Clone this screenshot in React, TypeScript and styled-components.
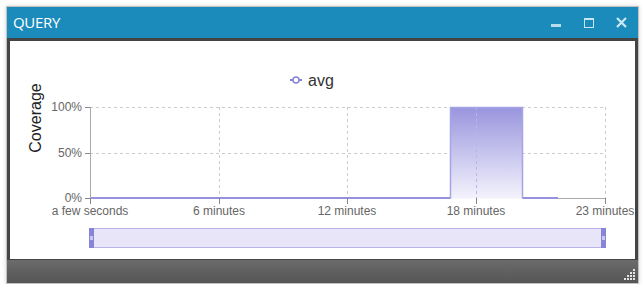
import { FC } from "react";
import styled, { createGlobalStyle } from "styled-components";

const GlobalStyle = createGlobalStyle`
  html, body {
    margin: 0;
    padding: 0;
    background: #ffffff;
  }
  body {
    font-family: "Liberation Sans", Arial, sans-serif;
  }
`;

const Window = styled.div`
  margin: 6px 0 0 6px;
  width: 631px;
  border: 1px solid #c2c2c2;
  box-shadow: 0 0 4px rgba(0, 0, 0, 0.18);
  display: flex;
  flex-direction: column;
`;

const TitleBar = styled.div`
  height: 31px;
  background-color: #1b8bbb;
  display: flex;
  align-items: center;
  padding: 0 0 0 6px;
`;

const Title = styled.span`
  flex: 1 1 auto;
  color: #ffffff;
  font-family: "Open Sans", "Noto Sans", sans-serif;
  font-size: 15px;
  letter-spacing: -0.3px;
  margin-top: -2px;
`;

const TitleButton = styled.div`
  width: 33px;
  height: 31px;
  display: flex;
  align-items: center;
  justify-content: center;

  svg {
    display: block;
  }
`;

const Frame = styled.div`
  background-color: #444444;
  padding: 3px 3px 1px 3px;
`;

const Content = styled.div`
  height: 218px;
  background-color: #ffffff;
`;

const Footer = styled.div`
  height: 21px;
  background: linear-gradient(#6b6b6b, #555555);
  display: flex;
  justify-content: flex-end;
  align-items: flex-end;
  padding: 0 2px 2px 0;
`;

const tickStyle = {
  fontSize: 12,
  fill: "#666666",
  fontFamily: "'Liberation Sans', Arial, sans-serif",
};

const xTicks = [
  { x: 90, label: "a few seconds" },
  { x: 219, label: "6 minutes" },
  { x: 347, label: "12 minutes" },
  { x: 476, label: "18 minutes" },
  { x: 605, label: "23 minutes" },
];

const yTicks = [
  { y: 107, label: "100%" },
  { y: 153, label: "50%" },
  { y: 198, label: "0%" },
];

const CoverageChart: FC = () => (
  <svg width={625} height={218} viewBox="10 41 625 218">
    <defs>
      <linearGradient id="barFill" x1="0" y1="0" x2="0" y2="1">
        <stop offset="0%" stopColor="#9995de" />
        <stop offset="100%" stopColor="#f4f3fc" />
      </linearGradient>
    </defs>

    {/* legend */}
    <line x1={290} y1={80} x2={302} y2={80} stroke="#8884d8" strokeWidth={2} />
    <circle cx={296} cy={80} r={3} fill="#ffffff" stroke="#8884d8" strokeWidth={1.5} />
    <text x={308} y={86} fontSize={16} fill="#333333" fontFamily="'Liberation Sans', Arial, sans-serif">
      avg
    </text>

    {/* y label */}
    <text
      x={0}
      y={0}
      transform="translate(41 118) rotate(-90)"
      textAnchor="middle"
      fontSize={16}
      fill="#222222"
      fontFamily="'Liberation Sans', Arial, sans-serif"
    >
      Coverage
    </text>

    {/* grid */}
    <g stroke="#cccccc" strokeDasharray="3 3" fill="none">
      <line x1={90} y1={107.5} x2={605} y2={107.5} />
      <line x1={90} y1={153.5} x2={605} y2={153.5} />
      {xTicks.slice(1).map((t) => (
        <line key={t.x} x1={t.x + 0.5} y1={107} x2={t.x + 0.5} y2={198} />
      ))}
    </g>

    {/* bar area */}
    <rect x={450} y={107.5} width={73} height={91} fill="url(#barFill)" />
    <line x1={476.5} y1={107} x2={476.5} y2={198} stroke="#b9b6e6" strokeDasharray="3 3" />
    <polyline
      points="90,198 450.5,198 450.5,107.5 522.5,107.5 522.5,198 558,198"
      fill="none"
      stroke="#a7a4e6"
      strokeWidth={1.5}
    />
    <line x1={90} y1={198} x2={450} y2={198} stroke="#8884d8" strokeWidth={1.5} />
    <line x1={523} y1={198} x2={558} y2={198} stroke="#8884d8" strokeWidth={1.5} />

    {/* axes */}
    <line x1={90.5} y1={107} x2={90.5} y2={198} stroke="#aaaaaa" />
    <line x1={558} y1={198.5} x2={605} y2={198.5} stroke="#aaaaaa" />
    {yTicks.map((t) => (
      <g key={t.label}>
        <line x1={85} y1={t.y + 0.5} x2={90} y2={t.y + 0.5} stroke="#888888" />
        <text x={82} y={t.y + 4} textAnchor="end" style={tickStyle}>
          {t.label}
        </text>
      </g>
    ))}
    {xTicks.map((t) => (
      <g key={t.label}>
        <line x1={t.x + 0.5} y1={198} x2={t.x + 0.5} y2={204} stroke="#888888" />
        <text x={t.x} y={215} textAnchor="middle" style={tickStyle}>
          {t.label}
        </text>
      </g>
    ))}

    {/* brush */}
    <rect x={89.5} y={228.5} width={516} height={19} fill="#e7e5f7" stroke="#b7b4e9" />
    <rect x={89} y={228} width={5} height={20} fill="#8884d8" />
    <rect x={90} y={236} width={3} height={4} fill="#c9c7f0" />
    <rect x={601} y={228} width={5} height={20} fill="#8884d8" />
    <rect x={602} y={236} width={3} height={4} fill="#c9c7f0" />
  </svg>
);

const ResizeGrip: FC = () => (
  <svg width={12} height={12} viewBox="0 0 12 12">
    {[
      [9, 0],
      [6, 3],
      [9, 3],
      [3, 6],
      [6, 6],
      [9, 6],
      [0, 9],
      [3, 9],
      [6, 9],
      [9, 9],
    ].map(([x, y]) => (
      <rect key={`${x}-${y}`} x={x} y={y} width={2} height={2} fill="#e6e6e6" />
    ))}
  </svg>
);

const App: FC = () => (
  <>
    <GlobalStyle />
    <Window>
      <TitleBar>
        <Title>QUERY</Title>
        <TitleButton>
          <svg width={10} height={10} viewBox="0 0 10 10">
            <rect x={0} y={6} width={10} height={3} fill="#b7dcee" />
          </svg>
        </TitleButton>
        <TitleButton>
          <svg width={10} height={10} viewBox="0 0 10 10">
            <rect x={0.5} y={0.5} width={9} height={9} fill="none" stroke="#c9e5f2" />
            <rect x={0} y={0} width={10} height={2} fill="#c9e5f2" />
          </svg>
        </TitleButton>
        <TitleButton>
          <svg width={11} height={11} viewBox="0 0 11 11">
            <path d="M1 1 L10 10 M10 1 L1 10" stroke="#cde7f3" strokeWidth={2.2} />
          </svg>
        </TitleButton>
      </TitleBar>
      <Frame>
        <Content>
          <CoverageChart />
        </Content>
      </Frame>
      <Footer>
        <ResizeGrip />
      </Footer>
    </Window>
  </>
);

export default App;
